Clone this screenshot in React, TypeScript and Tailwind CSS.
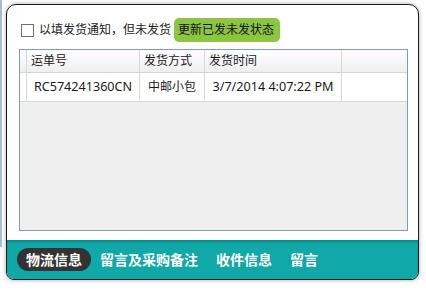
const FONT = { fontFamily: '"Noto Sans", "Noto Sans CJK SC", sans-serif' };

const columns = [
  { key: "no", label: "运单号", width: "w-[113px]" },
  { key: "way", label: "发货方式", width: "w-[65px]" },
  { key: "time", label: "发货时间", width: "w-[137px]" },
];

const rows = [{ no: "RC574241360CN", way: "中邮小包", time: "3/7/2014 4:07:22 PM" }];

const tabs = ["物流信息", "留言及采购备注", "收件信息", "留言"];

export default function App() {
  return (
    <div className="relative min-h-screen bg-white text-[#1a1a1a]" style={FONT}>
      {/* strip of the window behind */}
      <div className="absolute left-0 top-0 h-[247px] w-[2px] bg-[#a9bcd6]" />

      <div className="pl-[6px] pt-[4px]">
        <div className="flex h-[276px] w-[413px] flex-col overflow-hidden rounded-t-[10px] rounded-b-[8px] border border-[#1b1b1b] bg-white shadow-[0_0_4px_rgba(0,0,0,0.35)]">
          {/* Content */}
          <div className="flex min-h-0 flex-1 flex-col pb-[9px] pl-3 pr-[10px] pt-[13px]">
            <div className="flex h-6 items-center">
              <span className="ml-[2px] h-[13px] w-[13px] border border-[#707070] bg-white" />
              <span className="ml-[5px] text-[12px] leading-none text-[#222]">以填发货通知，但未发货</span>
              <button className="ml-[3px] flex h-6 items-center rounded-[5px] bg-[#8cc63e] pl-[4px] pr-[6px] text-[12px] leading-none text-[#111]">
                更新已发未发状态
              </button>
            </div>

            <div className="mt-[7px] flex-1 border border-[#7b9bc1] bg-[#efefef]">
              {/* Header */}
              <div className="flex h-[23px] border-b border-[#d4d4d4] bg-gradient-to-b from-white to-[#efefef] text-[12px]">
                <div className="w-[7px] border-r border-[#d8d8d8]" />
                {columns.map((c) => (
                  <div key={c.key} className={`${c.width} flex items-center border-r border-[#d8d8d8] pl-[4px]`}>
                    {c.label}
                  </div>
                ))}
                <div className="flex-1" />
              </div>

              {/* Rows */}
              {rows.map((r) => (
                <div key={r.no} className="flex h-[29px] border-b border-[#d4d4d4] bg-white text-[12px]">
                  <div className="w-[7px] border-r border-[#d8d8d8]" />
                  <div className="flex w-[113px] items-center justify-center border-r border-[#d8d8d8] text-[12.6px]">{r.no}</div>
                  <div className="flex w-[65px] items-center justify-center border-r border-[#d8d8d8]">{r.way}</div>
                  <div className="flex w-[137px] items-center justify-center border-r border-[#d8d8d8] text-[12.6px]">{r.time}</div>
                  <div className="flex-1" />
                </div>
              ))}
            </div>
          </div>

          {/* Tabs */}
          <div className="flex h-[39px] items-center bg-[#11a8a8] pl-[10px] shadow-[inset_0_2px_2px_rgba(0,0,0,0.18)]">
            {tabs.map((t, i) => (
              <div
                key={t}
                className={`flex h-[23px] items-center px-[9px] text-[14px] font-bold leading-none text-white ${
                  i === 0 ? "rounded-full bg-[#333333]" : ""
                }`}
              >
                {t}
              </div>
            ))}
          </div>
        </div>
      </div>
    </div>
  );
}
